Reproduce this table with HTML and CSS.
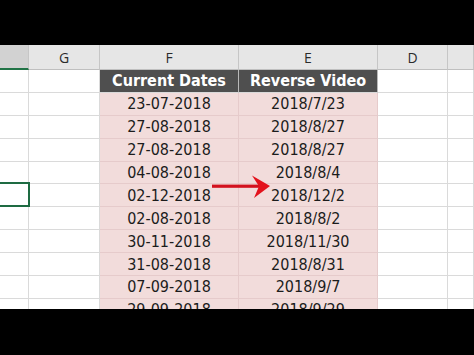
FILE: index.html
```html
<!DOCTYPE html>
<html>
<head>
<meta charset="utf-8">
<link rel="stylesheet" href="styles.css">
</head>
<body>
<div class="screen">
  <div class="bar top"></div>
  <div class="sheet">
    <div class="grid">
      <div class="hd selcol"></div><div class="hd">G</div><div class="hd">F</div><div class="hd">E</div><div class="hd">D</div><div class="hd"></div>

      <div class="c"></div><div class="c"></div><div class="c dk">Current Dates</div><div class="c dk">Reverse Video</div><div class="c"></div><div class="c"></div>
      <div class="c"></div><div class="c"></div><div class="c pk">23-07-2018</div><div class="c pk">2018/7/23</div><div class="c"></div><div class="c"></div>
      <div class="c"></div><div class="c"></div><div class="c pk">27-08-2018</div><div class="c pk">2018/8/27</div><div class="c"></div><div class="c"></div>
      <div class="c"></div><div class="c"></div><div class="c pk">27-08-2018</div><div class="c pk">2018/8/27</div><div class="c"></div><div class="c"></div>
      <div class="c"></div><div class="c"></div><div class="c pk">04-08-2018</div><div class="c pk">2018/8/4</div><div class="c"></div><div class="c"></div>
      <div class="c sel"></div><div class="c"></div><div class="c pk">02-12-2018</div><div class="c pk">2018/12/2</div><div class="c"></div><div class="c"></div>
      <div class="c"></div><div class="c"></div><div class="c pk">02-08-2018</div><div class="c pk">2018/8/2</div><div class="c"></div><div class="c"></div>
      <div class="c"></div><div class="c"></div><div class="c pk">30-11-2018</div><div class="c pk">2018/11/30</div><div class="c"></div><div class="c"></div>
      <div class="c"></div><div class="c"></div><div class="c pk">31-08-2018</div><div class="c pk">2018/8/31</div><div class="c"></div><div class="c"></div>
      <div class="c"></div><div class="c"></div><div class="c pk">07-09-2018</div><div class="c pk">2018/9/7</div><div class="c"></div><div class="c"></div>
      <div class="c"></div><div class="c"></div><div class="c pk">29-09-2018</div><div class="c pk">2018/9/29</div><div class="c"></div><div class="c"></div>
    </div>
    <svg class="arrow" width="474" height="264" viewBox="0 45 474 264">
      <rect x="212" y="184.6" width="48" height="3.2" fill="#d3121f"/>
      <path d="M252 175.5 L270 186 L254 198 L259 186.2 Z" fill="#e3131d"/>
    </svg>
  </div>
  <div class="bar bottom"></div>
</div>
</body>
</html>
```

FILE: styles.css
```css
html, body {
  margin: 0;
  padding: 0;
  background: #000;
}

.screen {
  width: 474px;
  height: 355px;
  display: flex;
  flex-direction: column;
  overflow: hidden;
  background: #000;
}

.bar.top {
  height: 45px;
  flex: none;
}

.bar.bottom {
  height: 46px;
  flex: none;
}

.sheet {
  position: relative;
  height: 264px;
  flex: none;
  overflow: hidden;
  background: #fff;
}

.grid {
  display: grid;
  grid-template-columns: 29px 71px 139px 139px 70px 1fr;
  grid-template-rows: 25px repeat(11, 22.9px);
}

.hd {
  box-sizing: border-box;
  background: #e6e6e6;
  border-right: 1px solid #c6c6c6;
  border-bottom: 1px solid #bfbfbf;
  color: #2b2b2b;
  font-family: "Open Sans", "DejaVu Sans", sans-serif;
  font-size: 14px;
  display: flex;
  align-items: center;
  justify-content: center;
  padding-top: 1px;
}

.hd.selcol {
  background: #d2d2d2;
  border-bottom: 2px solid #217346;
}

.c {
  box-sizing: border-box;
  border-right: 1px solid #dadada;
  border-bottom: 1px solid #dadada;
  display: flex;
  align-items: center;
  justify-content: center;
  font-family: "DejaVu Sans Condensed", "DejaVu Sans", sans-serif;
  font-stretch: condensed;
  font-size: 16px;
  color: #1c1c1c;
  white-space: nowrap;
}

.c.pk {
  background: #f2dcdb;
  border-right-color: #e6cbcb;
  border-bottom-color: #e6cbcb;
}

.c.dk {
  background: #4f4f4f;
  color: #fff;
  font-weight: bold;
  border-right-color: #b9b9b9;
  border-bottom-color: #dadada;
}

.c.sel {
  position: relative;
}

.c.sel::after {
  content: "";
  position: absolute;
  left: -3px;
  right: -2px;
  top: -2px;
  bottom: -1px;
  border: 2px solid #1e6b42;
}

.arrow {
  position: absolute;
  left: 0;
  top: 0;
  pointer-events: none;
}
```
